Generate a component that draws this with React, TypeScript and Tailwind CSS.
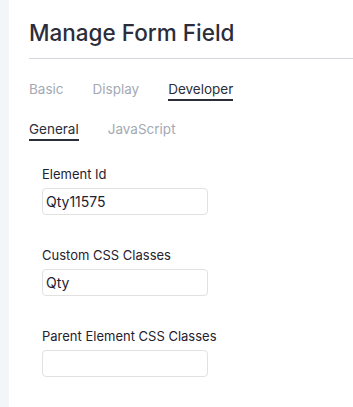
const font = { fontFamily: "Inter, 'Noto Sans', sans-serif" };

function Field({ label, value }: { label: string; value: string }) {
  return (
    <div className="flex flex-col">
      <label className="text-[13px] leading-[18px] text-[#1f2230]">{label}</label>
      <input
        readOnly
        value={value}
        className="mt-[5px] h-[27px] w-[166px] rounded-[4px] border border-[#e1e1e1] bg-white px-[3px] text-[14px] text-[#1f2230] outline-none"
      />
    </div>
  );
}

export default function App() {
  return (
    <div className="flex h-[407px] w-[353px] bg-white" style={font}>
      <div className="w-[9px] shrink-0 bg-[#f3f6f9]" />
      <div className="flex-1 pl-5 pt-[18px]">
        <h1 className="text-[22.5px] leading-[30px] font-medium text-[#2b2e3a]">Manage Form Field</h1>
        <div className="mt-[10px] h-px bg-[#d3d7dc]" />

        <div className="mt-[21px] flex gap-[29px] text-[13.5px] leading-[18px]">
          <span className="text-[#a4a9b4]">Basic</span>
          <span className="text-[#a4a9b4]">Display</span>
          <span className="border-b-2 border-[#2b2e3a] pb-px text-[#2b2e3a]">Developer</span>
        </div>

        <div className="mt-[19px] flex gap-[29px] text-[13.5px] leading-[18px]">
          <span className="border-b-2 border-[#2b2e3a] pb-px text-[#2b2e3a]">General</span>
          <span className="text-[#a4a9b4]">JavaScript</span>
        </div>

        <div className="mt-[24px] flex flex-col gap-[31px] pl-[13px]">
          <Field label="Element Id" value="Qty11575" />
          <Field label="Custom CSS Classes" value="Qty" />
          <Field label="Parent Element CSS Classes" value="" />
        </div>
      </div>
    </div>
  );
}
